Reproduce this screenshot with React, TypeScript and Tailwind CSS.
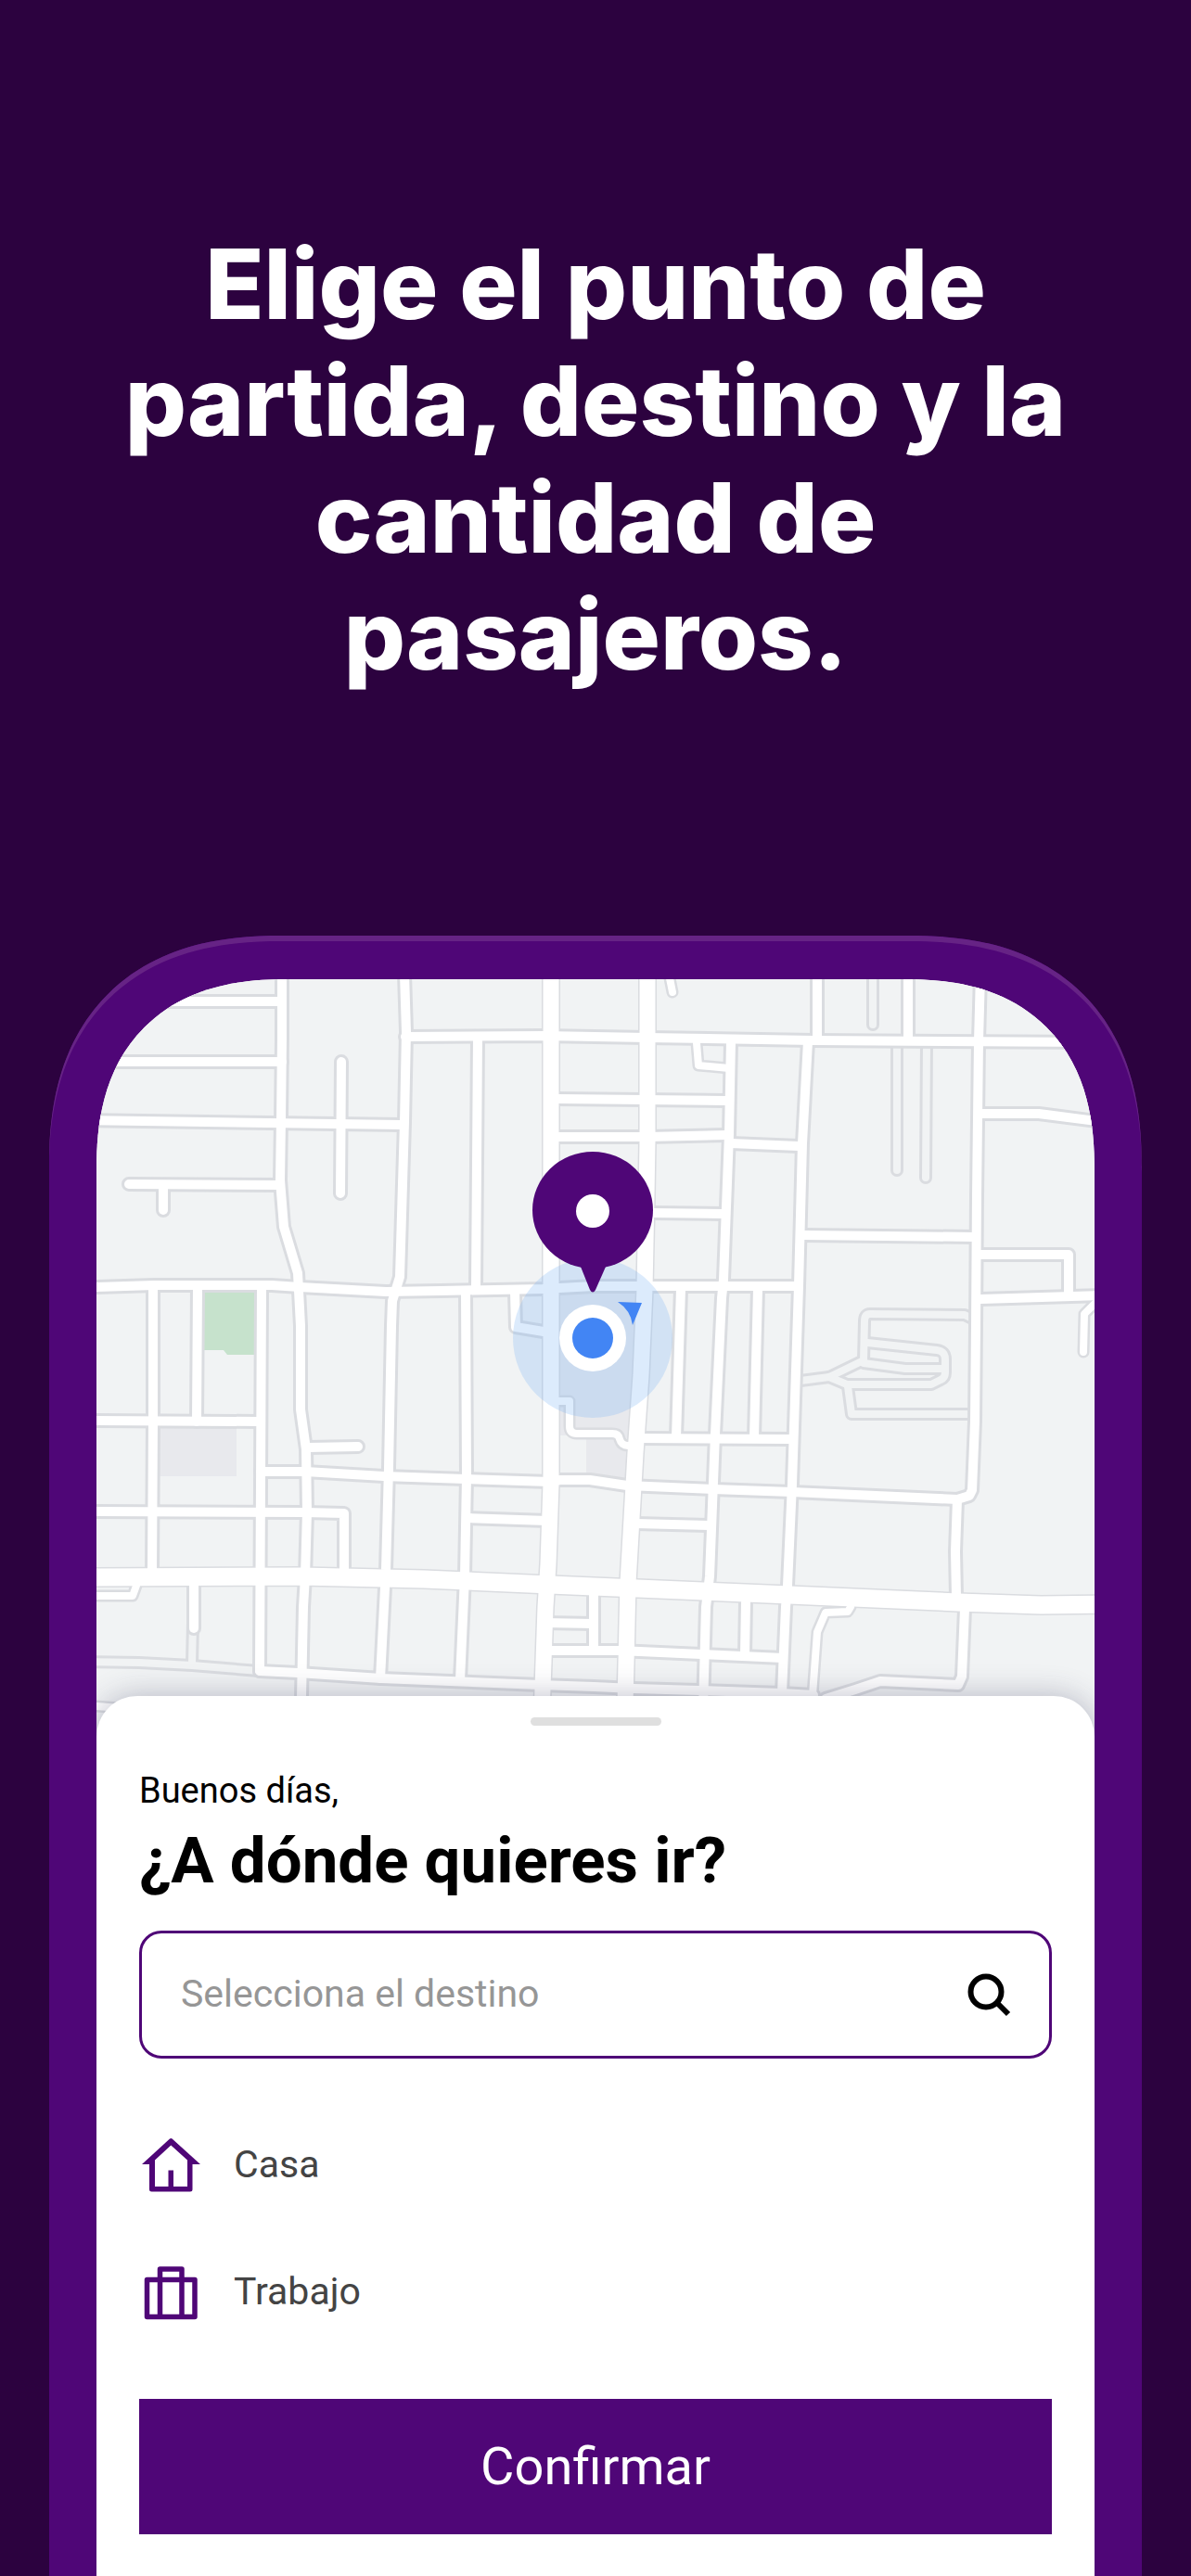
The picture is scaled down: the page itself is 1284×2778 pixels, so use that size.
import React, { useState } from 'react';

const roads = [
  // north - south streets
  'M304 1050V1120L303 1207L302 1273L306 1323L321 1373L324 1430V1520L330 1563L331 1630L329 1700L327 1733L324 1880',
  'M436 1050L438 1113L436 1210L431 1377L423 1403L422 1430L419 1583L416 1693L410 1810',
  'M515 1118L513 1390',
  'M502 1392L503 1593L501 1700L496 1812',
  'M788 1123L786 1223L780 1380L778 1400L771 1547L765 1700L761 1733L757 1880',
  'M871 1123L865 1233L861 1387L854 1600L849 1710L847 1733L843 1826',
  'M1057 1050L1055 1123L1053 1290L1052 1430L1051 1533L1048 1607L1045 1613L1032 1617L1030 1673L1031 1722',
  'M1040 1735L1037 1808L1033 1817L949 1813L922 1822L890 1832',
  'M881 1050V1118',
  'M979 1050V1118',
  'M165 1388V1533L164 1697',
  'M213 1388L212 1533',
  'M282 1390L281 1600L280 1802',
  'M734 1390L729 1550',
  'M817 1390L813 1550',
  'M640 1716V1780',
  'M804 1728L803 1785',
  'M555 1393L556 1431L586 1436',
  'M209 1705V1756',
  // east - west streets
  'M90 1080H304',
  'M90 1145H304',
  'M90 1208L433 1213',
  'M437 1118L585 1117L698 1119L877 1122L1190 1124',
  'M90 1389L104 1388L166 1386H293L323 1388L416 1393L475 1392L585 1390L640 1387H861',
  'M602 1185L782 1187',
  'M602 1226H698L784 1224',
  'M788 1233L861 1236',
  'M705 1308L780 1309',
  'M867 1332L1051 1334',
  'M1055 1201H1120L1190 1210',
  'M1057 1353H1152V1397',
  'M1057 1401L1190 1397',
  'M90 1532L279 1533',
  'M90 1630L329 1631L371 1632V1695',
  'M281 1587L329 1587L414 1592L502 1595L593 1598L604 1596H636L676 1602L769 1606L854 1609L1032 1617',
  'M504 1637L590 1640',
  'M685 1643L765 1645',
  'M690 1551L851 1552',
  'M587 1750L640 1751',
  'M590 1780H667L756 1784L844 1788',
  'M280 1802L321 1804L411 1810L582 1817L640 1819L683 1821L754 1823L843 1826L877 1828',
  // dead ends
  'M139 1277L302 1278',
  'M176 1278V1305',
  'M368 1145L367 1287',
  'M332 1561L386 1560',
];

const lanes = [
  'M751 1125L753 1149L786 1152',
  'M721 1050L725 1070',
  'M602 1511H614V1538Q614 1546 622 1546H660Q667 1546 668 1552Q670 1559 677 1559',
  'M90 1721H143L147 1710',
  'M917 1733L914 1738L890 1739L881 1760L876 1828',
  'M1181 1405L1169 1417L1168 1458',
  'M90 1839L130 1842',
];

const avenues = [
  'M594 1040V1600L591 1687L588 1733L583 1880',
  'M698 1040V1230L697 1290L695 1390L691 1483L685 1567L677 1707L673 1880',
];

const boulevard = 'M90 1701L325 1700L457 1703L593 1709L851 1720L1033 1728L1122 1731L1190 1730';

const paths = [
  'M941 1050V1105',
  'M967 1123V1262',
  'M999 1123L998 1270',
  'M1050 1423L1040 1418L938 1417Q932 1417 932 1425L931 1467L894 1485L863 1489',
  'M935 1448L1010 1456Q1019 1457 1019 1466V1480Q1019 1486 1014 1488L1004 1493H913L894 1485',
  'M931 1470L976 1476H1018',
  'M914 1495L918 1525H1050',
  'M90 1792L150 1793L207 1796L279 1802',
  'M208 1750L207 1794',
];

const places = [
  {
    name: 'Casa',
    icon: (
      <svg viewBox="0 0 68 68" className="h-[68px] w-[68px]" fill="#4f0677" fillRule="evenodd" aria-hidden="true">
        <path d="M33 5.5Q34.3 4.5 35.6 5.5L66 33H57.5V60Q57.5 62.5 55 62.5H13.5Q11 62.5 11 60V33H3ZM34.3 12.5L17 28.5V57H31.5V39.5H37V57H52V28.5Z" />
      </svg>
    )
  },
  {
    name: 'Trabajo',
    icon: (
      <svg viewBox="0 0 68 68" className="h-[68px] w-[68px]" fill="none" stroke="#4f0677" strokeWidth="5.5" strokeLinejoin="round" aria-hidden="true">
        <path d="M8.5 20.5H60V60.5H8.5ZM22.5 60V9H46V60" />
      </svg>
    )
  }
];

function CityMap() {
  return (
    <svg viewBox="104 1056 1076 820" className="block w-full" fill="none" aria-hidden="true">
      <rect x="104" y="1056" width="1076" height="820" fill="#f1f3f4" />
      <path d="M219 1390h58l-2 71h-30l-4-5h-22z" fill="#c6e2cc" />
      <path d="M171 1540h84v52h-84zM602 1393h90l-12 155h-78zM632 1548h46v52h-46z" fill="#e8e9ed" />

      <g strokeLinejoin="round" strokeLinecap="round">
        <g stroke="#dadce0" strokeWidth="14">
          {paths.map((d) => <path key={d} d={d} />)}
        </g>
        <g stroke="#f1f3f4" strokeWidth="8">
          {paths.map((d) => <path key={d} d={d} />)}
        </g>
        <g stroke="#dadce0">
          <g strokeWidth="16">{roads.map((d) => <path key={d} d={d} />)}</g>
          <g strokeWidth="13">{lanes.map((d) => <path key={d} d={d} />)}</g>
          <g strokeWidth="20">{avenues.map((d) => <path key={d} d={d} />)}</g>
          <path d={boulevard} strokeWidth="22" />
        </g>
        <g stroke="#fff">
          <g strokeWidth="10">{roads.map((d) => <path key={d} d={d} />)}</g>
          <g strokeWidth="8">{lanes.map((d) => <path key={d} d={d} />)}</g>
          <g strokeWidth="17">{avenues.map((d) => <path key={d} d={d} />)}</g>
          <path d={boulevard} strokeWidth="19" />
        </g>
      </g>

      {/* current location */}
      <circle cx="639" cy="1443" r="86" fill="#7fb5f5" fillOpacity="0.27" />
      <circle cx="639" cy="1443" r="36" fill="#fff" />
      <circle cx="639" cy="1443" r="22" fill="#4285f4" />
      <path d="M666 1404L692 1405L682 1429Q680 1413 666 1404Z" fill="#4285f4" />

      {/* pickup pin */}
      <ellipse cx="639" cy="1305" rx="65" ry="63" fill="#4f0677" />
      <path d="M626 1366L636 1391Q639 1396 642 1391L653 1366Z" fill="#4f0677" />
      <circle cx="639" cy="1306" r="18" fill="#fff" />
    </svg>
  );
}

export default function App() {
  const [destination, setDestination] = useState('');

  return (
    <main className="flex min-h-screen flex-col bg-[#2c023f]">
      <h1 className="px-[100px] pt-[243px] pb-[262px] text-center font-['Inter',sans-serif] text-[104px] leading-[126px] font-extrabold text-white">
        Elige el punto de partida, destino y la cantidad de pasajeros.
      </h1>

      <div className="mx-[53px] flex flex-1 flex-col rounded-t-[222px] bg-[#4f0677] px-[51px] pt-[47px] shadow-[inset_0_6px_0_#662385] supports-[corner-shape:squircle]:rounded-t-[250px] supports-[corner-shape:squircle]:[corner-shape:superellipse(1.25)]">
        <div className="flex flex-1 flex-col overflow-hidden rounded-t-[180px] bg-white font-['Roboto',sans-serif] supports-[corner-shape:squircle]:rounded-t-[205px] supports-[corner-shape:squircle]:[corner-shape:superellipse(1.25)]">
          <CityMap />

          <section className="relative -mt-[47px] flex-1 rounded-t-[44px] bg-white px-[46px] pt-[23px] pb-[45px] shadow-[0_0_32px_rgba(40,40,80,0.3)]">
            <div className="mx-auto h-[9px] w-[141px] rounded-full bg-[#dfdfdf]" />

            <p className="mt-[46px] text-[38px] leading-[48px] text-black">Buenos días,</p>
            <h2 className="mt-[12px] text-[69px] leading-[80px] font-bold text-black">¿A dónde quieres ir?</h2>

            <div className="mt-[35px] flex h-[138px] items-center rounded-[24px] border-3 border-[#4f0677] pr-[41px] pl-[42px]">
              <input
                type="text"
                aria-label="Selecciona el destino"
                placeholder="Selecciona el destino"
                value={destination}
                onChange={(e) => setDestination(e.target.value)}
                className="min-w-0 flex-1 text-[41px] text-black placeholder:text-[#969696] focus:outline-none"
              />
              <button type="button" aria-label="Buscar">
                <svg viewBox="0 0 48 48" className="h-[48px] w-[48px]" fill="none" stroke="#000" strokeWidth="6">
                  <circle cx="21" cy="21" r="16.5" />
                  <path d="M33 33l12 12" />
                </svg>
              </button>
            </div>

            <ul className="mt-[46px]">
              {places.map((place) => (
                <li key={place.name}>
                  <button type="button" className="flex h-[137px] w-full items-center gap-[34px] text-left">
                    {place.icon}
                    <span className="text-[41px] text-[#444]">{place.name}</span>
                  </button>
                </li>
              ))}
            </ul>

            <button type="button" className="mt-[47px] h-[146px] w-full bg-[#4f0677] text-[56px] text-white">
              Confirmar
            </button>
          </section>
        </div>
      </div>
    </main>
  );
}
